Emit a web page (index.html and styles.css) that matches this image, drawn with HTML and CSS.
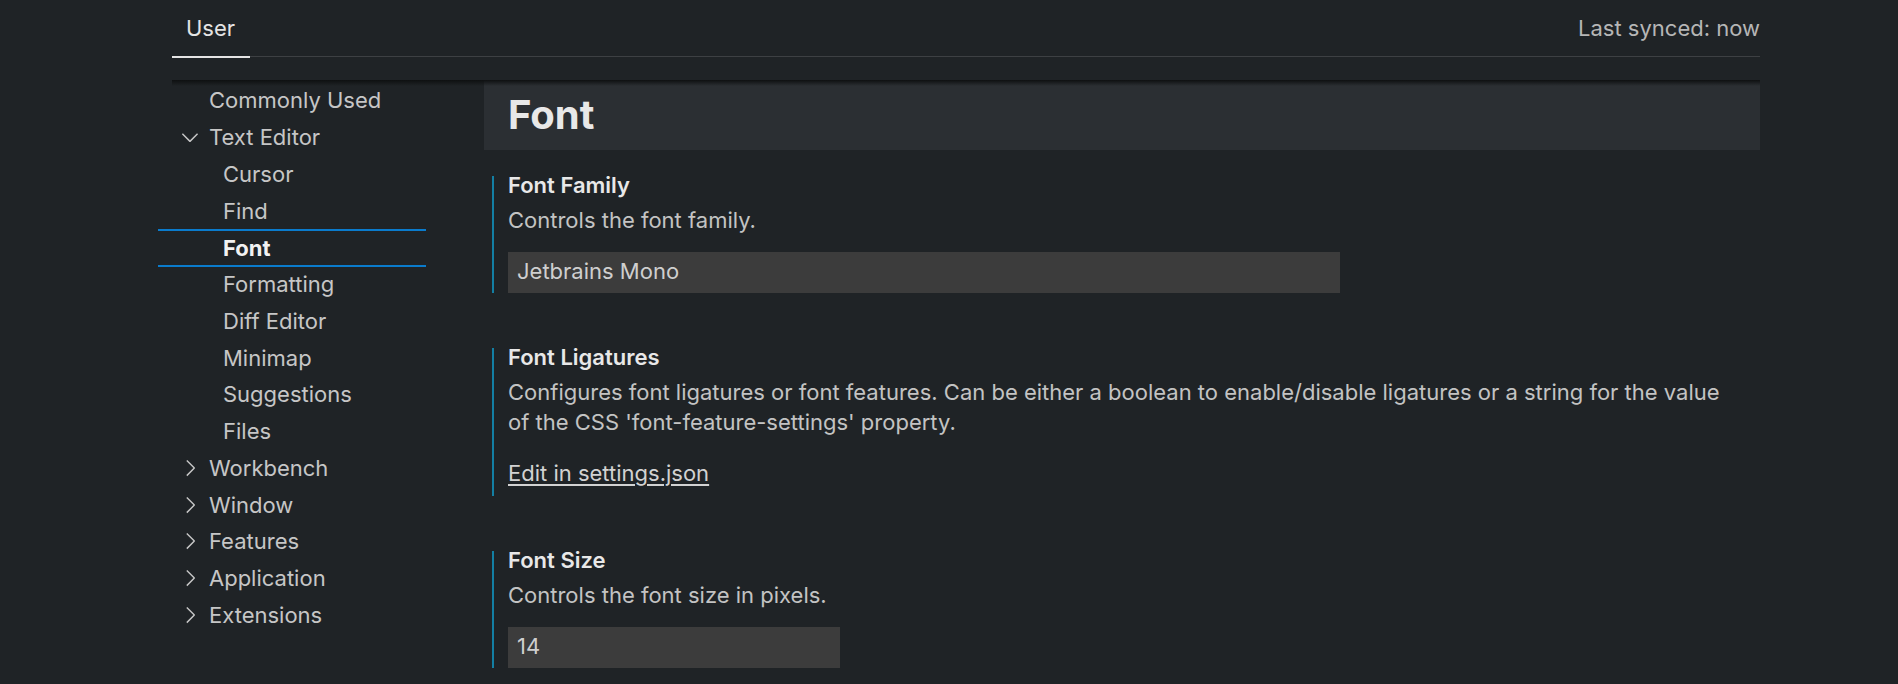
FILE: index.html
```html
<!DOCTYPE html>
<html lang="en">
<head>
<meta charset="utf-8">
<title>Settings</title>
<link rel="stylesheet" href="styles.css">
</head>
<body>
<div class="settings">
  <div class="header">
    <div class="tab">User</div>
    <div class="sync">Last synced: now</div>
  </div>
  <div class="body">
    <nav class="toc">
      <div class="row top"><span class="twistie"></span><span>Commonly Used</span></div>
      <div class="row top"><svg class="twistie" viewBox="0 0 16 16"><path d="M7.976 10.072l4.357-4.357.62.618L8.284 11h-.618L3 6.333l.619-.618 4.357 4.357z"/></svg><span>Text Editor</span></div>
      <div class="row child">Cursor</div>
      <div class="row child">Find</div>
      <div class="row child selected">Font</div>
      <div class="row child">Formatting</div>
      <div class="row child">Diff Editor</div>
      <div class="row child">Minimap</div>
      <div class="row child">Suggestions</div>
      <div class="row child">Files</div>
      <div class="row top"><svg class="twistie" viewBox="0 0 16 16"><path d="M10.072 8.024L5.715 3.667l.618-.62L11 7.716v.618L6.333 13l-.618-.619 4.357-4.357z"/></svg><span>Workbench</span></div>
      <div class="row top"><svg class="twistie" viewBox="0 0 16 16"><path d="M10.072 8.024L5.715 3.667l.618-.62L11 7.716v.618L6.333 13l-.618-.619 4.357-4.357z"/></svg><span>Window</span></div>
      <div class="row top"><svg class="twistie" viewBox="0 0 16 16"><path d="M10.072 8.024L5.715 3.667l.618-.62L11 7.716v.618L6.333 13l-.618-.619 4.357-4.357z"/></svg><span>Features</span></div>
      <div class="row top"><svg class="twistie" viewBox="0 0 16 16"><path d="M10.072 8.024L5.715 3.667l.618-.62L11 7.716v.618L6.333 13l-.618-.619 4.357-4.357z"/></svg><span>Application</span></div>
      <div class="row top"><svg class="twistie" viewBox="0 0 16 16"><path d="M10.072 8.024L5.715 3.667l.618-.62L11 7.716v.618L6.333 13l-.618-.619 4.357-4.357z"/></svg><span>Extensions</span></div>
    </nav>
    <main class="content">
      <div class="section-title">Font</div>
      <div class="item first">
        <div class="title">Font Family</div>
        <div class="desc">Controls the font family.</div>
        <div class="input wide">Jetbrains Mono</div>
      </div>
      <div class="item">
        <div class="title">Font Ligatures</div>
        <div class="desc long">Configures font ligatures or font features. Can be either a boolean to enable/disable ligatures or a string for the value of the CSS 'font-feature-settings' property.</div>
        <a class="link" href="#">Edit in settings.json</a>
      </div>
      <div class="item">
        <div class="title">Font Size</div>
        <div class="desc">Controls the font size in pixels.</div>
        <div class="input narrow">14</div>
      </div>
    </main>
  </div>
</div>
</body>
</html>
```

FILE: styles.css
```css
html, body {
  margin: 0;
  padding: 0;
  background: #1f2326;
  overflow: hidden;
}

body {
  font-family: Inter, "Noto Sans", sans-serif;
  color: #c8c8c8;
  height: 684px;
}

.settings {
  margin-left: 172px;
  width: 1588px;
}

.header {
  display: flex;
  justify-content: space-between;
  height: 56px;
  border-bottom: 1px solid #3d4043;
}

.tab {
  margin-bottom: -2px;
  padding: 15px 15px 0 14px;
  border-bottom: 2px solid #e4e4e4;
  font-size: 22px;
  line-height: 26px;
  color: #e4e4e4;
}

.sync {
  padding-top: 15px;
  font-size: 22px;
  line-height: 26px;
  color: #b6b6b6;
}

.body {
  display: flex;
  margin-top: 23px;
  position: relative;
}

.body::before {
  content: "";
  position: absolute;
  left: 0;
  right: 0;
  top: 0;
  height: 6px;
  background: linear-gradient(#0e1011, rgba(14, 16, 17, 0));
  z-index: 2;
}

.toc {
  flex: none;
  width: 268px;
  margin-left: -14px;
  padding-top: 2px;
}

.row {
  box-sizing: border-box;
  height: 36.75px;
  display: flex;
  align-items: center;
  font-size: 22px;
  color: #c6c6c6;
  white-space: nowrap;
}

.row.top {
  padding-left: 19px;
}

.row.child {
  padding-left: 65px;
}

.twistie {
  flex: none;
  width: 26px;
  height: 26px;
  margin-right: 6px;
  fill: #c6c6c6;
}

.row.selected {
  height: 38px;
  margin-bottom: -1.25px;
  border-top: 2px solid #0a7bcc;
  border-bottom: 2px solid #0a7bcc;
  font-weight: 700;
  color: #f2f2f2;
}

.content {
  flex: 1;
  margin-left: 58px;
  min-width: 0;
}

.section-title {
  height: 70px;
  line-height: 70px;
  padding-left: 24px;
  background: #2b2f33;
  font-size: 40px;
  font-weight: 700;
  color: #e8e8e8;
}

.item {
  margin-top: 55px;
  margin-left: 8px;
  padding-left: 14px;
  border-left: 2px solid #137fa3;
}

.item.first {
  margin-top: 26px;
}

.title {
  font-size: 22px;
  font-weight: 600;
  line-height: 18px;
  color: #e8e8e8;
}

.desc {
  margin-top: 11px;
  font-size: 22px;
  line-height: 30px;
  color: #c3c3c3;
}

.desc.long {
  max-width: 1220px;
}

.input {
  box-sizing: border-box;
  margin-top: 17px;
  height: 41px;
  padding: 0 0 2px 9px;
  background: #3c3c3c;
  font-size: 22px;
  line-height: 39px;
  color: #cfcfcf;
}

.input.wide {
  width: 832px;
}

.input.narrow {
  width: 332px;
}

.link {
  display: block;
  width: max-content;
  margin-top: 21px;
  padding-bottom: 8px;
  font-size: 22px;
  line-height: 30px;
  color: #d2d2d2;
  text-decoration: underline;
  text-underline-offset: 3px;
}
```
